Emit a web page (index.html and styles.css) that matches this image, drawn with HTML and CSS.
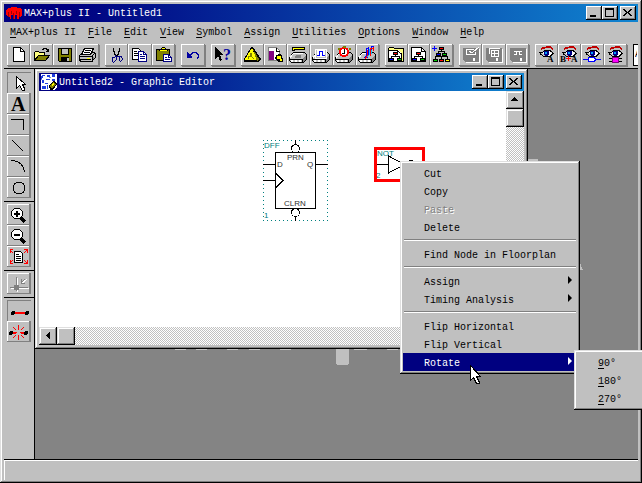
FILE: index.html
```html
<!DOCTYPE html>
<html lang="en">
<head>
<meta charset="utf-8">
<title>MAX+plus II - Untitled1</title>
<link rel="stylesheet" href="styles.css">
</head>
<body>
<svg class="defs" aria-hidden="true">
  <symbol id="chip" viewBox="0 0 23 22">
    <path d="M4 11l2-3h11l3 3v4l-4 4H4l-2-2v-3z" fill="#000"/>
    <path d="M6 9h11l2 2-3 4H3l1-3z" fill="#c0c0c0"/>
    <path d="M6 9h10v1H6l-2 4H3v-1l1-2z" fill="#fff"/>
    <path d="M3 16h12v2H4z" fill="#c0c0c0"/>
    <path d="M16 14l3-2v3l-3 3z" fill="#808080"/>
    <path d="M4 16h2v2H4zM8 16h2v2H8zM12 16h2v2h-2z" fill="#fff"/>
  </symbol>
  <symbol id="tree" viewBox="0 0 23 22">
    <path d="M11.500 11v2M7.500 15v-2.500h8V15" stroke="#000" fill="none"/>
    <path d="M9 8h5v3H9z"/><path d="M10 9h3v1h-3z" fill="#f00"/>
    <path d="M5 14h5v3H5zM13 14h5v3h-5z"/><path d="M6 15h3v1H6z" fill="#00f"/><path d="M14 15h3v1h-3z" fill="#0c0"/>
  </symbol>
  <symbol id="eye" viewBox="0 0 23 22">
    <path d="M7 3h4v-1h4l3 2v2l-3-2h-4l-5 2z" fill="#c00000"/>
    <path d="M4 8.500h3l3-2h5l4 3M5 9.500l4 3h6l3-3" fill="none" stroke="#000"/>
    <path d="M7 9l3-2h4l3 3-3 2h-4z" fill="#fff"/>
    <path d="M9 7h5v4h-1v1h-3v-1H9z" fill="#000080"/><path d="M10 8h2v2h-2z" fill="#00a0ff"/>
  </symbol>
  <symbol id="disk" viewBox="0 0 23 22">
    <path d="M5 5h16v14H7z" fill="#fff"/>
    <path d="M4 4h16v14H6l-2-2z" fill="#808080"/>
    <path d="M14 14h2v3h-2z" fill="#fff"/>
  </symbol>
  <symbol id="min" viewBox="0 0 14 12"><path d="M3 8h6v2H3z"/></symbol>
  <symbol id="max" viewBox="0 0 14 12"><path d="M2.500 2.500h8v7h-8z" fill="none" stroke="#000"/><path d="M2 1h9v2H2z"/></symbol>
  <symbol id="close" viewBox="0 0 14 12"><path d="M2 2h2v1h1v1h1v1h1V4h1V3h1V2h2v1h-1v1H9v1H8v1h1v1h1v1h1v1H9V8H8V7H7V6H6v1H5v1H4v1H2V8h1V7h1V6h1V5H4V4H3V3H2z"/></symbol>
</svg>

<div class="app">
  <header class="titlebar">
    <svg class="logo" viewBox="0 0 16 14"><path d="M0 4l2-2h3V1h6v1h3l2 2v5l-2 2h-1v2h-2V9H9v4H7V9H5v4H4v-2H2L0 9z" fill="#f00"/><path d="M2.500 11V6M5.500 8V5M10.500 8V5M13.500 11V6M7.500 7v6" stroke="#a00000" fill="none"/></svg>
    <h1>MAX+plus II - Untitled1</h1>
    <div class="winbtns">
      <button aria-label="Minimize"><svg><use href="#min"/></svg></button>
      <button aria-label="Maximize"><svg><use href="#max"/></svg></button>
      <button class="close" aria-label="Close"><svg><use href="#close"/></svg></button>
    </div>
  </header>

  <nav class="menubar">
    <button><u>M</u>AX+plus II</button><button><u>F</u>ile</button><button><u>E</u>dit</button><button><u>V</u>iew</button><button><u>S</u>ymbol</button><button><u>A</u>ssign</button><button><u>U</u>tilities</button><button><u>O</u>ptions</button><button><u>W</u>indow</button><button><u>H</u>elp</button>
  </nav>

  <div class="toolbar" role="toolbar">
    <div class="group">
      <button aria-label="New"><svg viewBox="0 0 23 22"><path d="M6.500 3.500h7l4 4v10h-11z" fill="#fff" stroke="#000"/><path d="M13.500 3.500v4h4" fill="none" stroke="#000"/></svg></button>
      <button aria-label="Open"><svg viewBox="0 0 23 22"><path d="M4.500 16V8.500l1-1h3l1 1h5v3" fill="#ffff80" stroke="#000"/><path d="M4.500 16.500l4-5h11l-4 5z" fill="#808000" stroke="#000"/><path d="M12.500 6v-1h1v-1h3v1h1v1h1v2M15.500 7.500h3v-3" fill="none" stroke="#000"/></svg></button>
      <button aria-label="Save"><svg viewBox="0 0 23 22"><path d="M5.500 4.500h13v13h-12l-1-1z" fill="#808000" stroke="#000"/><path d="M8 4h8v7H8z"/><path d="M9 5h6v5H9z" fill="#c0c0c0"/><path d="M8 13h8v5H8z"/><path d="M14 14h2v3h-2z" fill="#c0c0c0"/></svg></button>
      <button aria-label="Print"><svg viewBox="0 0 23 22"><path d="M3.500 11.500l3-3h11l2 1v4l-4 4h-11l-1-2z" fill="#c0c0c0" stroke="#000"/><path d="M8.500 4.500h9l-3 6h-9z" fill="#fff" stroke="#000"/><path d="M9 6.500h6M8 8.500h6M4 12.500h12v5M4 15.500h11M16 12l3-3" fill="none" stroke="#000"/><path d="M11 14h3v1h-3z" fill="#ff0"/><path d="M17 13h1v2h-1z" fill="#808080"/></svg></button>
    </div>
    <div class="group">
      <button aria-label="Cut"><svg viewBox="0 0 23 22"><path d="M8.500 4v3l1 1v2l2 2M14.500 4v3l-1 1v2l-2 2v1" fill="none" stroke="#000"/><path d="M11 11l-1 2H8l-1 1v3l1 1h1l2-2v-3l2-1 1 1v3l1 1h1l1-1v-2l-1-2h-2" fill="none" stroke="#000080"/></svg></button>
      <button aria-label="Copy"><svg viewBox="0 0 23 22"><path d="M4.500 4.500h6l2 2v9h-8z" fill="#fff" stroke="#000"/><path d="M6 7.500h3M6 9.500h4M6 11.500h4" stroke="#000"/><path d="M10.500 7.500h5l3 3v7h-8z" fill="#fff" stroke="#000080"/><path d="M15.500 7.500v3h3M12 10.500h2M12 12.500h5M12 14.500h5" fill="none" stroke="#000080"/></svg></button>
      <button aria-label="Paste"><svg viewBox="0 0 23 22"><path d="M4.500 5.500h13v11h-13z" fill="#808000" stroke="#000"/><path d="M7 7V5h2l1-2h3l1 2h2v2z"/><path d="M8 6h7v1H8zM10 4h3v1h-3z" fill="#ff0"/><path d="M11.500 10.500h5l3 3v4h-8z" fill="#fff" stroke="#000080"/><path d="M16.500 10.500v3h3M13 13.500h2M13 15.500h5" fill="none" stroke="#000080"/></svg></button>
    </div>
    <div class="group">
      <button aria-label="Undo"><svg viewBox="0 0 23 22"><path d="M6 8h1v1h1v1h1v1h1v1h1v2H6z" fill="#0000a0"/><path d="M9 10.500h1v-1h1v-1h4v1h1v1h1v3h-1v1" fill="none" stroke="#0000a0"/></svg></button>
    </div>
    <div class="group">
      <button aria-label="Context help"><svg viewBox="0 0 23 22"><path d="M4 3l8 8H9l2 5-2 1-2-5-3 3z"/><text class="serif navy" x="12" y="16" font-size="16">?</text></svg></button>
    </div>
    <div class="group">
      <button aria-label="Compiler"><svg viewBox="0 0 23 22"><path d="M10 3h2l8 12-3 3H3v-3z"/><path d="M11 4L4 15v1h12z" fill="#ff0"/><path d="M12 5l6 10-2 2z" fill="#808000"/><path d="M7.500 15v-3h2V9h1v3l2 3" fill="none" stroke="#808000"/></svg></button>
      <button aria-label="Simulation input"><svg viewBox="0 0 23 22"><path d="M4.500 3.500h8l3 3v10h-11z" fill="#fff" stroke="#808080"/><path d="M5 7h5v9H5z" fill="#800080"/><path d="M12.500 4v3h3" fill="none" stroke="#000"/><path d="M12 11h2v-1h3v1h1v3h1v4h-4l-4-3z"/><path d="M13 12h4v3h-4zM16 15h2v2h-2z" fill="#ff0"/></svg></button>
      <button aria-label="Simulator"><svg viewBox="0 0 23 22"><use href="#chip"/><path d="M5 3h13v3H8v1H5z"/><path d="M6 4h11v1H7v1H6z" fill="#ff0"/><path d="M9 11h5v3H8z" fill="#808080"/></svg></button>
      <button aria-label="Timing simulator"><svg viewBox="0 0 23 22"><use href="#chip"/><path d="M5 5h11v9H5z" fill="#c0c0c0" stroke="#fff"/><path d="M7 6h8v7H7z" fill="#fff"/><path d="M7 11.500h2.500v-4h3v4H15" fill="none" stroke="#00f"/></svg></button>
      <button aria-label="Timing analyzer"><svg viewBox="0 0 23 22"><use href="#chip"/><circle cx="11" cy="8" r="4" fill="#fff" stroke="#f00" stroke-width="2"/><path d="M10 2h3v2h-3zM5 4h2v2H5zM16 4h2v2h-2z" fill="#808000"/><path d="M11.500 5v4H9" fill="none" stroke="#000"/></svg></button>
      <button aria-label="Programmer"><svg viewBox="0 0 23 22"><use href="#chip"/><path d="M8 14l2-2V5l2-1v8l3-4V3l3-1" fill="none" stroke="#00f"/><path d="M9 15l2-3V6M14 12V5l3-1v3" fill="none" stroke="#f00"/><path d="M11 13l2-2V5M15 10V6" fill="none" stroke="#00c0ff"/></svg></button>
    </div>
    <div class="group">
      <button aria-label="Project hierarchy"><svg viewBox="0 0 23 22"><path d="M3.500 17.500v-13l1-1h4l1 1h9v13z" fill="#ffff80" stroke="#000"/><path d="M4 6h9l3 3v8H4z" fill="#fff"/><path d="M4 6.500h8l4 3V17" fill="none" stroke="#000"/><use href="#tree" x="-1"/></svg></button>
      <button aria-label="Hierarchy top"><svg viewBox="0 0 23 22"><path d="M3.500 3.500h10l4 4v10h-14z" fill="#fff" stroke="#000"/><path d="M13.500 4v3.500h4" fill="none" stroke="#000"/><use href="#tree" x="-1"/></svg></button>
      <button aria-label="Hierarchy display"><svg viewBox="0 0 23 22"><path d="M2 4.500h5M4.500 2v5" fill="none" stroke="#00f"/><path d="M11.500 6v2M8.500 9v-1.500h6V9M5.500 15v-2.500h12V15M11.500 12v3" fill="none" stroke="#000"/><path d="M9 3h5v3H9zM6 9h5v3H6zM12 9h5v3h-5zM3 15h5v3H3zM9 15h5v3H9zM15 15h5v3h-5z"/><path d="M10 4h3v1h-3z" fill="#f00"/><path d="M7 10h3v1H7z" fill="#00f"/><path d="M13 10h3v1h-3zM4 16h3v1H4z" fill="#0c0"/><path d="M10 16h3v1h-3z" fill="#f00"/><path d="M16 16h3v1h-3z" fill="#ff0"/></svg></button>
    </div>
    <div class="group">
      <button aria-label="Save and check"><svg viewBox="0 0 23 22"><use href="#disk"/><path d="M7.500 5v5.500h9V8M8 5.500h7M10 7l3 2 7-6" fill="none" stroke="#fff"/></svg></button>
      <button aria-label="Save and compile"><svg viewBox="0 0 23 22"><use href="#disk"/><path d="M7.500 10V4.500h10M9.500 12.500v-6h7v6zM12.500 7v5M10 9.500h6" fill="none" stroke="#fff"/></svg></button>
      <button aria-label="Save and simulate"><svg viewBox="0 0 23 22"><use href="#disk"/><path d="M8 7.500h8M10.500 8v3M13.500 8v3M8 10.500h3M13 10.500h3" fill="none" stroke="#fff"/></svg></button>
    </div>
    <div class="group">
      <button aria-label="Find text"><svg viewBox="0 0 23 22"><use href="#eye"/><text class="serif" x="12" y="18" font-size="9">A</text></svg></button>
      <button aria-label="Replace text"><svg viewBox="0 0 23 22"><use href="#eye"/><text class="serif" x="2" y="18" font-size="9">B</text><text class="serif" x="13" y="18" font-size="9">A</text><path d="M8 14.500h5M10.500 12v5" stroke="#f00"/></svg></button>
      <button aria-label="Find node"><svg viewBox="0 0 23 22"><use href="#eye"/><path d="M2 15.500h6M14 15.500h6" stroke="#00f"/><path d="M7.500 13.500h6l1 2-1 2h-6z" fill="#fff" stroke="#00f"/></svg></button>
      <button aria-label="Find symbol"><svg viewBox="0 0 23 22"><use href="#eye"/><path d="M5 14.500h13M5 17.500h13" stroke="#000"/><path d="M8.500 13.500h6v5h-6z" fill="#f0f" stroke="#800080"/></svg></button>
    </div>
    <select class="fontbox" aria-label="Font"><option>A</option></select>
  </div>

  <div class="work">
    <aside class="tools">
      <div class="toolgroup">
        <button class="pressed" aria-label="Select"><svg viewBox="0 0 23 20"><path d="M9.500 3.500v12l3-3 3 5h2v-2l-2-4h3z" fill="#fff" stroke="#000"/></svg></button>
        <button aria-label="Text"><svg viewBox="0 0 23 20"><text class="serif" x="4" y="17" font-size="20">A</text></svg></button>
        <button aria-label="Orthogonal line"><svg viewBox="0 0 23 20"><path d="M4 4.500h12.500V15" fill="none" stroke="#000"/></svg></button>
        <button aria-label="Diagonal line"><svg viewBox="0 0 23 20"><path d="M5 4l11 11" stroke="#000"/></svg></button>
        <button aria-label="Arc"><svg viewBox="0 0 23 20"><path d="M4 3.500q12 0 13.500 12" fill="none" stroke="#000"/></svg></button>
        <button aria-label="Circle"><svg viewBox="0 0 23 20"><circle cx="12" cy="10" r="6" fill="none" stroke="#000"/></svg></button>
      </div>
      <div class="toolgroup">
        <button aria-label="Zoom in"><svg viewBox="0 0 23 20"><path d="M13 12l5 5" stroke="#000" stroke-width="3"/><circle cx="10" cy="8.500" r="5.500" fill="#fff" stroke="#000"/><path d="M7 9h6M10 6v6" stroke="#000" stroke-width="2"/></svg></button>
        <button aria-label="Zoom out"><svg viewBox="0 0 23 20"><path d="M13 12l5 5" stroke="#000" stroke-width="3"/><circle cx="10" cy="8.500" r="5.500" fill="#fff" stroke="#000"/><path d="M7 9h6" stroke="#000" stroke-width="2"/></svg></button>
        <button aria-label="Fit in window"><svg viewBox="0 0 23 20"><path d="M7.500 4.500h6l2 2v9h-8z" fill="#fff" stroke="#000"/><path d="M9 7.500h3M9 9.500h5M9 11.500h5M9 13.500h5" stroke="#000"/><path d="M6 6L3 3m0 3V2.500h3M17 6l3-3m-3-.5h3V6M6 13l-3 3m0-3v3.500h3M17 13l3 3m-3 .5h3V13" fill="none" stroke="#f00"/></svg></button>
      </div>
      <div class="toolgroup">
        <button aria-label="Connection dot"><svg viewBox="0 0 23 20"><path d="M10.500 4v14M4 14.500h18M14 10l6-5" stroke="#fff"/><path d="M9.500 3v14M3 13.500h18M18 5l-4 4V5m0 4h4" fill="none" stroke="#808080"/><circle cx="9.500" cy="13.500" r="3" fill="#808080"/></svg></button>
      </div>
      <div class="toolgroup">
        <button class="pressed" aria-label="Rubberband on"><svg viewBox="0 0 23 20"><path d="M5 12h14" stroke="#f00" stroke-width="2"/><circle cx="6" cy="12" r="2"/><circle cx="20" cy="12" r="2"/></svg></button>
        <button aria-label="Rubberband off"><svg viewBox="0 0 23 20"><path d="M5 10.500h5M13 10.500h6M11.500 3v5M11.500 13v5M6 5l3 3M17 5l-3 3M6 16l3-3M17 16l-3-3" stroke="#f00"/><path d="M6 11h3M14 11h3" stroke="#f00" stroke-width="2"/><circle cx="4" cy="11" r="2"/><circle cx="19" cy="11" r="2"/></svg></button>
      </div>
    </aside>

    <main class="mdi">
      <svg class="backdrop" width="603" height="390" aria-hidden="true"><path fill="#c0c0c0" d="M85 280h11v1H85zM140 280h11v1h-11zM161 280h11v1h-11zM192 280h11v1h-11zM214 280h11v1h-11zM245 280h11v1h-11zM319 280h13v1h-13zM352 280h11v1h-11zM301 278h13v17h-1v1h-11v-1h-1zM493 90h10v2h-10zM545 194l3 7h-3z"/></svg>
      <section class="child">
        <header class="titlebar">
          <svg class="docicon" viewBox="0 0 16 16"><path d="M0 0h16v13l-2 3H0z" fill="#fff"/><path d="M0 2h1V1h3v1H2v2H1v1H0zM6 1h3v2H6zM11 0h3v3h-3zM1 6h2v3H1zM5 5h4v1H5zM11 5h3v2h-3zM4 9h3v1H4zM1 12h4v3H1zM6 11h1v4H6z" fill="#2040e0"/><path d="M0 5h1v1H0zM8 3h2v1H8zM13 9h3v1h-3z" fill="#8090c0"/><path d="M9 16l-1-5 4-4h2l2 3-4 6z"/><path d="M9 13v-2l3-3 3 2-4 4z" fill="#808000"/><path d="M10 11l2-2 1 1-2 2z" fill="#ff0"/></svg>
          <h2>Untitled2 - Graphic Editor</h2>
          <div class="winbtns">
            <button aria-label="Minimize"><svg><use href="#min"/></svg></button>
            <button aria-label="Maximize"><svg><use href="#max"/></svg></button>
            <button class="close" aria-label="Close"><svg><use href="#close"/></svg></button>
          </div>
        </header>
        <div class="editor">
          <svg class="sheet" viewBox="39 91 467 236" preserveAspectRatio="xMinYMin slice">
            <path d="M263 140.500h65M263 220.500h65M263.500 140v81M327.500 140v81" fill="none" stroke="#008080" stroke-dasharray="1 3"/>
            <g fill="none" stroke="#000">
              <rect x="275.500" y="152.500" width="40" height="56"/>
              <circle cx="295.500" cy="148.500" r="4"/><circle cx="295.500" cy="212.500" r="4"/>
              <path d="M295.500 140v4M295.500 217v4M263 164.500h12M316 164.500h12M263 180.500h12M276 173.500l7 7-7 7"/>
            </g>
            <g class="pin"><text x="287" y="160">PRN</text><text x="277" y="167">D</text><text x="307" y="167">Q</text><text x="284" y="206">CLRN</text></g>
            <g class="tag"><text x="264" y="148">DFF</text><text x="264" y="218">1</text><text x="377" y="156">NOT</text><text x="376" y="178">2</text></g>
            <path d="M377 164.500h11M388.500 156v17l16-8.500zM409 160.500h4" fill="none" stroke="#000"/>
            <rect x="375.500" y="148.500" width="48" height="32" fill="none" stroke="#f00" stroke-width="3"/>
          </svg>
          <div class="scroll vertical"><button aria-label="Scroll up"><svg viewBox="0 0 14 14"><path d="M6 4h1v1h1v1h1v1h1v1H3V7h1V6h1V5h1z"/></svg></button><div class="thumb"></div></div>
          <div class="scroll horizontal"><button aria-label="Scroll left"><svg viewBox="0 0 14 14"><path d="M5 6h1V5h1V4h1V3h1v7H8V9H7V8H6V7H5z"/></svg></button><div class="thumb"></div></div>
        </div>
      </section>
    </main>
  </div>

  <footer class="status"></footer>

  <div class="popup context" role="menu">
    <button role="menuitem">Cut</button>
    <button role="menuitem">Copy</button>
    <button role="menuitem" disabled>Paste</button>
    <button role="menuitem">Delete</button>
    <hr>
    <button role="menuitem">Find Node in Floorplan</button>
    <hr>
    <button role="menuitem" class="parent">Assign</button>
    <button role="menuitem" class="parent">Timing Analysis</button>
    <hr>
    <button role="menuitem">Flip Horizontal</button>
    <button role="menuitem">Flip Vertical</button>
    <button role="menuitem" class="parent active">Rotate</button>
  </div>
  <div class="popup submenu" role="menu">
    <button role="menuitem"><u>9</u>0°</button>
    <button role="menuitem"><u>1</u>80°</button>
    <button role="menuitem"><u>2</u>70°</button>
  </div>
  <svg class="cursor" viewBox="0 0 12 20" aria-hidden="true"><path d="M.5.500v15l3-3 3 6h2.500v-2l-2.500-5h4z" fill="#fff" stroke="#000"/></svg>
</div>
</body>
</html>
```
FILE: styles.css
```css
* { box-sizing: border-box; }

body {
  margin: 0;
  background: #c0c0c0;
  color: #000;
  font: 10px/18px "Liberation Mono", monospace;
}

button {
  margin: 0;
  padding: 0;
  border: 0;
  border-radius: 0;
  background: #c0c0c0;
  color: inherit;
  font: inherit;
}

svg { display: block; shape-rendering: crispEdges; }
.defs { position: absolute; width: 0; height: 0; }
.serif { font-family: "Liberation Serif", serif; font-weight: bold; }
.navy { fill: #0000a0; }
u { text-underline-offset: 2px; }

.app {
  position: relative;
  display: flex;
  flex-direction: column;
  min-height: 100vh;
  padding: 4px 4px 3px;
  overflow: hidden;
  background: #c0c0c0;
  box-shadow: inset -1px -1px #000, inset 1px 1px #dfdfdf, inset -2px -2px #808080, inset 2px 2px #fff;
}

/* Title bars */
.titlebar {
  display: flex;
  align-items: center;
  height: 18px;
  padding: 0 2px;
  background: linear-gradient(90deg, #000080 10%, #1084d0);
  color: #fff;
}
.titlebar h1, .titlebar h2 {
  flex: 1;
  margin: 0;
  padding-top: 2px;
  font-size: 10px;
  font-weight: normal;
  white-space: nowrap;
}
.logo { width: 16px; height: 14px; margin-right: 2px; }
.docicon { width: 16px; height: 16px; margin-right: 2px; }
.winbtns { display: flex; }
.winbtns button {
  width: 16px;
  height: 14px;
  padding: 1px;
  box-shadow: inset -1px -1px #000, inset 1px 1px #fff, inset -2px -2px #808080;
}
.winbtns .close { margin-left: 2px; }
.winbtns svg { width: 14px; height: 12px; }

/* Menu bar */
.menubar { display: flex; gap: 12px; height: 20px; padding: 2px 6px 0; }
.menubar button { white-space: nowrap; }

/* Tool bar */
.toolbar {
  display: grid;
  grid-template-columns: 92px 70px 24px 24px 138px 68px 70px 92px 1fr;
  gap: 6px;
  padding: 2px 0 2px 3px;
  height: 27px;
  border-bottom: 1px solid #000;
}
.group { display: flex; height: 22px; box-shadow: 1px 1px #808080; }
.group button { flex: 1; overflow: hidden; box-shadow: inset -1px -1px #808080, inset 1px 1px #fff; }
.group svg { width: 23px; height: 22px; }
.fontbox {
  appearance: none;
  min-width: 0;
  width: 100%;
  height: 22px;
  padding: 0 1px;
  border: 1px solid #000;
  border-right: 0;
  border-radius: 0;
  background: #fff;
  font: inherit;
}

/* Work area */
.work { display: flex; flex: 1; min-height: 390px; }
.tools { width: 31px; border-right: 1px solid #000; }
.toolgroup { padding: 2px 2px 3px 3px; }
.toolgroup:first-child { padding-top: 3px; }
.toolgroup + .toolgroup { border-top: 1px solid #000; }
.toolgroup button {
  display: block;
  width: 24px;
  height: 21px;
  box-shadow: inset -2px -1px #808080, inset 1px 1px #fff;
}
.toolgroup .pressed { box-shadow: inset 1px 1px #808080; }
.toolgroup svg { width: 23px; height: 20px; overflow: visible; }

.mdi { position: relative; flex: 1; min-width: 0; overflow: hidden; background: #848484; }
.backdrop { position: absolute; left: 0; top: 0; }

.child {
  position: absolute;
  left: 0;
  top: 0;
  display: flex;
  flex-direction: column;
  width: 493px;
  height: 280px;
  padding: 4px;
  background: #c0c0c0;
  box-shadow: inset -1px -1px #000, inset 1px 1px #dfdfdf, inset -2px -2px #808080, inset 2px 2px #fff;
}
.editor {
  display: grid;
  flex: 1;
  grid-template: 1fr 18px / 1fr 18px;
  min-height: 0;
  background: #fff;
}
.sheet { width: 100%; height: 100%; overflow: hidden; font: 8px "Liberation Sans", sans-serif; }
.pin { fill: #303030; }
.tag { fill: #008080; }

.scroll { display: flex; background: repeating-conic-gradient(#fff 0 25%, #c0c0c0 0 50%) 0 0 / 2px 2px; }
.vertical { flex-direction: column; }
.scroll button, .thumb {
  width: 18px;
  height: 18px;
  padding: 2px;
  background: #c0c0c0;
  box-shadow: inset -1px -1px #000, inset 1px 1px #dfdfdf, inset -2px -2px #808080, inset 2px 2px #fff;
}

.status {
  height: 21px;
  border-top: 1px solid #000;
  box-shadow: inset 1px 1px #fff;
}

/* Pop-up menus */
.popup {
  position: absolute;
  padding: 3px;
  background: #c0c0c0;
  box-shadow: inset -1px -1px #000, inset 1px 1px #dfdfdf, inset -2px -2px #808080, inset 2px 2px #fff;
}
.popup button {
  position: relative;
  display: block;
  width: 100%;
  height: 18px;
  padding: 2px 0 0 21px;
  text-align: left;
  white-space: nowrap;
}
.popup button:disabled { color: #808080; text-shadow: 1px 1px #fff; }
.popup .active { background: #000080; color: #fff; }
.parent::after {
  content: "";
  position: absolute;
  top: 4px;
  right: 5px;
  border: 4px solid transparent;
  border-left-color: currentColor;
  border-right: 0;
}
.popup hr {
  height: 2px;
  margin: 3px 1px 4px;
  border: 0;
  border-top: 1px solid #808080;
  border-bottom: 1px solid #fff;
}
.context { left: 400px; top: 161px; width: 180px; }
.submenu { left: 574px; top: 350px; width: 90px; }
.cursor { position: absolute; left: 470px; top: 365px; width: 12px; height: 20px; }
```
